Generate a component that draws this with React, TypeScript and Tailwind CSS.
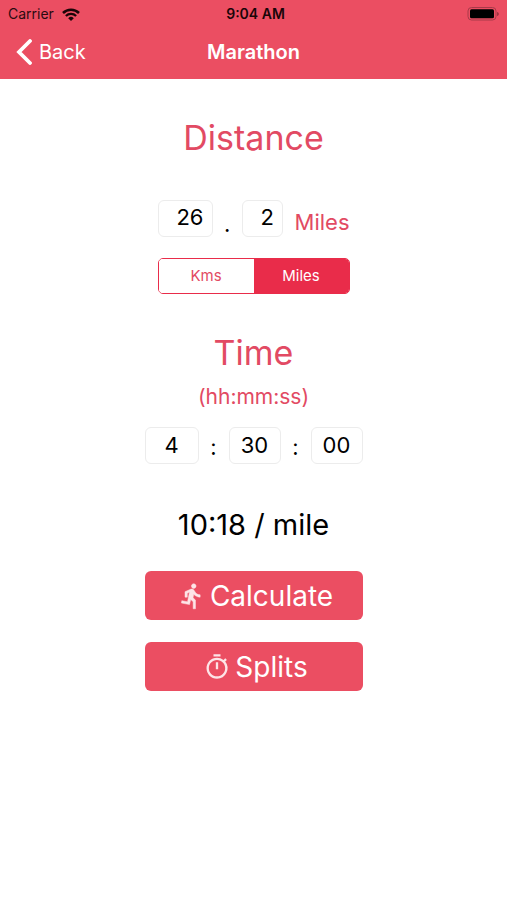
import { useState } from "react";
import { MdOutlineTimer } from "react-icons/md";

function RunnerIcon() {
  return (
    <svg
      viewBox="0 0 24 24"
      className="size-7 text-[#fde4e7]"
      fill="currentColor"
      stroke="currentColor"
      strokeWidth="0.4"
      aria-hidden="true"
    >
      <path d="M13.490 5.480c1.100 0 2-.9 2-2s-.9-2-2-2-2 .9-2 2 .9 2 2 2zm-3.600 13.900l1-4.400 2.100 2v6h2v-7.500l-2.100-2 .6-3c1.300 1.500 3.300 2.500 5.500 2.500v-2c-1.900 0-3.500-1-4.300-2.400l-1-1.600c-.4-.6-1-1-1.700-1-.3 0-.5.1-.8.1l-5.200 2.200v4.700h2v-3.400l1.800-.7-1.600 8.100-4.900-1-.4 2 7 1.400z" />
    </svg>
  );
}

function StatusBar() {
  return (
    <div className="grid h-7 grid-cols-3 items-center px-2 text-sm text-[#2a0b10]">
      <div className="flex items-center gap-2">
        <span>Carrier</span>
        <svg viewBox="0 0 18 13" className="h-[13px] w-[18px]" fill="none" aria-hidden="true">
          <path d="M1 5a11.300 11.300 0 0 1 16 0" stroke="#1a0508" strokeWidth="2.500" />
          <path d="M3.900 8a7.200 7.200 0 0 1 10.200 0" stroke="#1a0508" strokeWidth="2.300" />
          <path d="M9 13 6.200 10.200a4 4 0 0 1 5.600 0Z" fill="#1a0508" />
        </svg>
      </div>
      <span className="pl-1 text-center text-sm font-semibold text-[#1a0508]">9:04 AM</span>
      <svg viewBox="0 0 32 14" className="h-[14px] w-8 justify-self-end" aria-hidden="true">
        <rect x="1" y="0.500" width="28" height="12.500" rx="3.500" fill="none" stroke="#a83a49" />
        <rect x="3" y="2.300" width="24" height="9" rx="1.500" fill="#000" />
        <path d="M30.200 5v4c1-.3 1.500-1.100 1.500-2s-.5-1.700-1.500-2Z" fill="#8d2e3b" />
      </svg>
    </div>
  );
}

function NavBar() {
  return (
    <div className="grid h-[51px] grid-cols-3 items-center px-4 pb-[3px] text-white">
      <button type="button" className="flex items-center gap-[7px] justify-self-start text-xl">
        <svg viewBox="0 0 16 26" className="h-[26px] w-4" fill="none" aria-hidden="true">
          <path d="M14 2 3 13l11 11" stroke="white" strokeWidth="3.800" strokeLinecap="round" />
        </svg>
        Back
      </button>
      <h1 className="text-center text-xl font-semibold">Marathon</h1>
    </div>
  );
}

const field =
  "h-[37px] rounded-md border border-[#ececec] bg-white text-[22px] text-black outline-none";

const action =
  "flex h-[49px] w-[218px] items-center justify-center gap-1 rounded-md bg-[#eb4e62] pl-1 text-[28px] text-white";

export default function App() {
  const [unit, setUnit] = useState("Miles");
  return (
    <div className="min-h-screen bg-white font-['Inter','Liberation_Sans',sans-serif]">
      <header className="bg-[#eb4e62]">
        <StatusBar />
        <NavBar />
      </header>
      <main className="flex flex-col items-center pt-[37px] text-[#e24a63]">
        <h2 className="text-[34px] leading-[44px]">Distance</h2>
        <div className="mt-[39px] flex h-[38px] w-48 items-center justify-between">
          <input aria-label="Whole distance" defaultValue="26" className={`${field} w-[55px] pr-2 pb-[3px] text-right`} />
          <span className="pt-3 text-[22px] leading-6 text-black">.</span>
          <input aria-label="Decimal distance" defaultValue="2" className={`${field} w-[41px] pr-2 pb-[3px] text-right`} />
          <span className="pt-2 text-[22px] leading-7">{unit}</span>
        </div>
        <div
          role="group"
          aria-label="Distance unit"
          className="mt-[21px] grid h-9 w-48 grid-cols-2 overflow-hidden rounded-[5px] border border-[#e92c4a]"
        >
          {["Kms", "Miles"].map((name) => (
            <button
              key={name}
              type="button"
              aria-pressed={unit === name}
              onClick={() => setUnit(name)}
              className={unit === name ? "bg-[#e92c4a] text-[15px] text-white" : "bg-white text-[15px]"}
            >
              {name}
            </button>
          ))}
        </div>
        <h2 className="mt-[37px] text-[34px] leading-[44px]">Time</h2>
        <p className="mt-2 text-[21px] leading-7">(hh:mm:ss)</p>
        <div className="mt-4 flex w-[218px] items-center justify-between text-[22px] text-black">
          <input aria-label="Hours" defaultValue="4" className={`${field} w-[54px] pb-px text-center`} />
          <span className="pt-1">:</span>
          <input aria-label="Minutes" defaultValue="30" className={`${field} w-[52px] pb-px text-center`} />
          <span className="pt-1">:</span>
          <input aria-label="Seconds" defaultValue="00" className={`${field} w-[52px] pb-px text-center`} />
        </div>
        <output className="mt-[41px] block text-[29px] leading-10 text-black">10:18 / mile</output>
        <button type="button" className={`mt-[26px] ${action}`}>
          <RunnerIcon />
          Calculate
        </button>
        <button type="button" className={`mt-[22px] ${action}`}>
          <MdOutlineTimer className="size-7 text-[#fde4e7]" aria-hidden="true" />
          Splits
        </button>
      </main>
    </div>
  );
}
